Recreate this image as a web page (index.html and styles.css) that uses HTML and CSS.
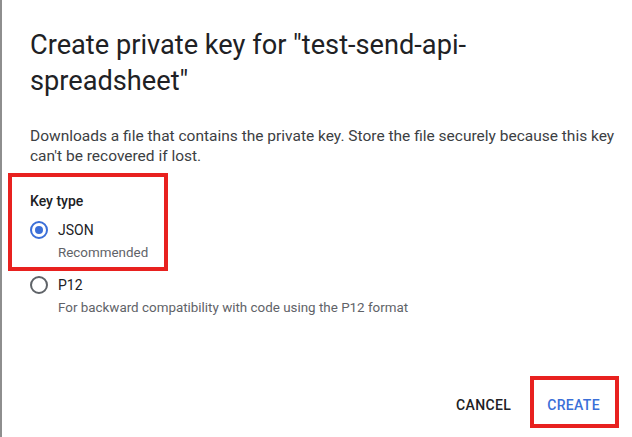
FILE: index.html
```html
<!DOCTYPE html>
<html lang="en">
<head>
<meta charset="utf-8">
<title>Create private key</title>
<link rel="stylesheet" href="styles.css">
</head>
<body>
<div class="screen">
  <div class="edge"></div>
  <div class="dialog">
    <h1 class="title">Create private key for "test-send-api-spreadsheet"</h1>
    <p class="desc">Downloads a file that contains the private key. Store the file securely because this key can't be recovered if lost.</p>
    <div class="label">Key type</div>
    <div class="option">
      <div class="row">
        <span class="radio checked"></span>
        <span class="opt-text">JSON</span>
      </div>
      <div class="hint">Recommended</div>
    </div>
    <div class="option second">
      <div class="row">
        <span class="radio"></span>
        <span class="opt-text">P12</span>
      </div>
      <div class="hint">For backward compatibility with code using the P12 format</div>
    </div>
    <div class="footer">
      <button class="btn">CANCEL</button>
      <button class="btn primary">CREATE</button>
    </div>
  </div>
  <div class="mark mark-type"></div>
  <div class="mark mark-create"></div>
</div>
</body>
</html>
```
FILE: styles.css
```css
* { box-sizing: border-box; }
html, body { margin: 0; padding: 0; background: #fff; }
body { font-family: Roboto, "Noto Sans", "Liberation Sans", sans-serif; }

.screen {
  position: relative;
  display: flex;
  width: 632px;
  height: 437px;
  overflow: hidden;
}
.edge {
  width: 2px;
  flex: none;
  background: #8e8e8e;
}
.dialog {
  flex: 1;
  display: flex;
  flex-direction: column;
  padding: 27px 24px 14px 28px;
  background: #fff;
}
.title {
  margin: 0;
  font-size: 27.2px;
  line-height: 36px;
  font-weight: 400;
  color: #202124;
  width: 480px;
}
.desc {
  margin: 27px -20px 0 0;
  font-size: 15.5px;
  line-height: 20px;
  color: #3c4043;
}
.label {
  margin-top: 25px;
  font-size: 14px;
  line-height: 20px;
  font-weight: 500;
  color: #202124;
}
.option { margin-top: 9px; }
.option.second { margin-top: 12px; }
.row {
  display: flex;
  align-items: center;
  gap: 8px;
  height: 20px;
}
.radio {
  width: 18px;
  height: 18px;
  border: 2px solid #5f6368;
  border-radius: 50%;
  display: flex;
  align-items: center;
  justify-content: center;
  flex: none;
}
.radio.checked { border-color: #3b6fd8; }
.radio.checked::after {
  content: "";
  width: 8px;
  height: 8px;
  border-radius: 50%;
  background: #3b6fd8;
}
.opt-text {
  margin-left: 2px;
  font-size: 14px;
  line-height: 20px;
  color: #202124;
}
.hint {
  margin-top: 3px;
  padding-left: 28px;
  font-size: 13.4px;
  line-height: 20px;
  color: #5f6368;
}
.footer {
  margin-top: auto;
  display: flex;
  justify-content: flex-end;
  gap: 20px;
}
.btn {
  height: 36px;
  padding: 0 8px;
  border: 0;
  background: transparent;
  font-family: inherit;
  font-size: 14px;
  font-weight: 500;
  letter-spacing: 0.35px;
  color: #202124;
}
.btn.primary { color: #3b6fd8; }

.mark {
  position: absolute;
  border: 4px solid #e8211f;
}
.mark-type { left: 8px; top: 173px; width: 160px; height: 98px; }
.mark-create { left: 530px; top: 376px; width: 89px; height: 52px; }
```
